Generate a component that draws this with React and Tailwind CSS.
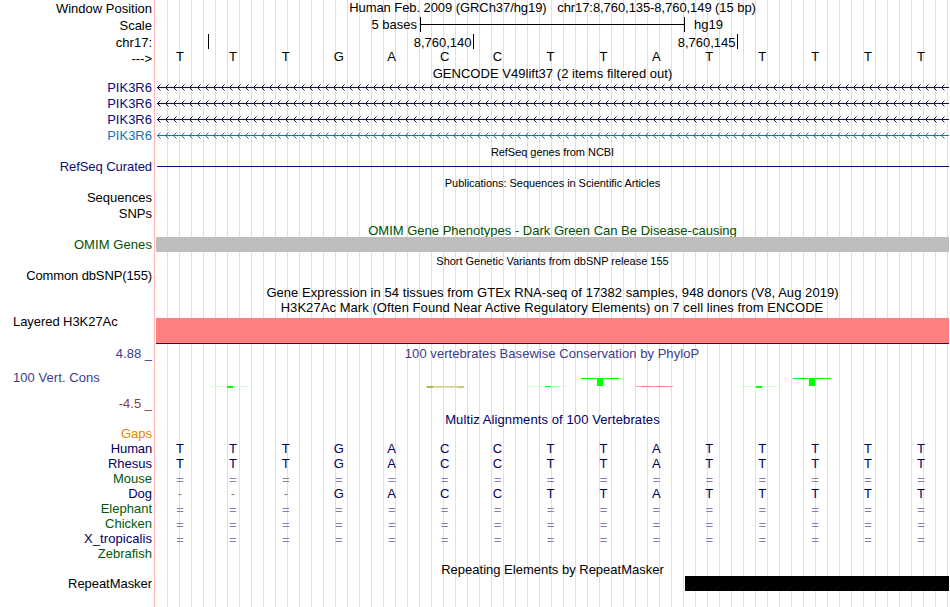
import clsx from "clsx";

const NAVY = "text-[#0c0c78]";
const ALIGN = "text-[#000064]";
const GREEN = "text-[#005000]";
const SPECIES_GREEN = "text-[#005a0a]";

// Labels of the left column, top to bottom. h and gap (space above) are Tailwind classes.
const labels = [
  { text: "Window Position", h: "h-[17px]" },
  { text: "Scale", h: "h-4" },
  { text: "chr17:", h: "h-[18px]" },
  { text: "--->", h: "h-[15px]" },
  { text: "PIK3R6", h: "h-4", gap: "mt-[13px]", color: NAVY },
  { text: "PIK3R6", h: "h-4", color: NAVY },
  { text: "PIK3R6", h: "h-4", color: NAVY },
  { text: "PIK3R6", h: "h-4", color: "text-[#1474b0]" },
  { text: "RefSeq Curated", h: "h-[15px]", gap: "mt-4", color: NAVY, track: "tracking-[-0.07px]" },
  { text: "Sequences", h: "h-4", gap: "mt-[15px]" },
  { text: "SNPs", h: "h-4" },
  { text: "OMIM Genes", h: "h-[15px]", gap: "mt-4", color: GREEN, track: "tracking-[0.08px]" },
  { text: "Common dbSNP(155)", h: "h-[15px]", gap: "mt-4", track: "tracking-[-0.12px]" },
  { text: "Layered H3K27Ac", h: "h-[15px]", gap: "mt-[31px]", left: true, track: "tracking-[-0.06px]" },
  { text: "4.88 _", h: "h-4", gap: "mt-4", color: "text-[#3c3c8c]" },
  { text: "100 Vert. Cons", h: "h-[15px]", gap: "mt-[9px]", left: true, color: "text-[#3c3c8c]", track: "tracking-[0.06px]" },
  { text: "-4.5 _", h: "h-4", gap: "mt-[10px]", color: "text-[#8c3c3c]" },
  { text: "Gaps", h: "h-[15px]", gap: "mt-[15px]", color: "text-[#e18700]" },
  { text: "Human", h: "h-[15px]", color: ALIGN, track: "tracking-[-0.15px]" },
  { text: "Rhesus", h: "h-[15px]", color: ALIGN },
  { text: "Mouse", h: "h-[15px]", color: SPECIES_GREEN },
  { text: "Dog", h: "h-[15px]", color: ALIGN },
  { text: "Elephant", h: "h-[15px]", color: SPECIES_GREEN },
  { text: "Chicken", h: "h-[15px]", color: SPECIES_GREEN },
  { text: "X_tropicalis", h: "h-[15px]", color: ALIGN, track: "tracking-[0.06px]" },
  { text: "Zebrafish", h: "h-[15px]", color: SPECIES_GREEN },
  { text: "RepeatMasker", h: "h-[15px]", gap: "mt-[15px]", track: "tracking-[-0.05px]" },
];

const alignments = [
  "TTTGACCTTATTTTT",
  "TTTGACCTTATTTTT",
  "===============",
  "---GACCTTATTTTT",
  "===============",
  "===============",
  "===============",
];

const Labels = () => (
  <div className="flex w-[154px] shrink-0 flex-col">
    {labels.map(({ text, h, gap, color, left, track }, i) => (
      <div
        key={i}
        className={clsx("flex shrink-0 items-center whitespace-nowrap", h, gap, color, track, left ? "pl-[13px]" : "justify-end pr-[2px]")}
      >
        {text}
      </div>
    ))}
  </div>
);

const Title = ({ className, children }) => (
  <div className={clsx("flex shrink-0 items-center justify-center whitespace-pre", className)}>{children}</div>
);

const Bases = ({ seq, className }) => (
  <div className={clsx("-ml-[2.5px] grid w-[794px] shrink-0 grid-cols-15 items-center text-center", className)}>
    {seq.split("").map((base, i) => (
      <span key={i} className={clsx((base === "=" || base === "-") && "text-[#8080b8]", base === "=" && "pt-px")}>
        {base}
      </span>
    ))}
  </div>
);

// Intron line with strand arrows every 8px
const Gene = ({ color }) => (
  <svg width="793" height="16" className="block shrink-0" fill={color} shapeRendering="crispEdges">
    <rect x="1" y="8" width="792" height="1" />
    {Array.from({ length: 99 }, (_, i) => (
      <g key={i}>
        <rect x={i * 8 + 2} y="7" width="1" height="3" />
        <rect x={i * 8 + 3} y="6" width="1" height="1" />
        <rect x={i * 8 + 3} y="10" width="1" height="1" />
        <rect x={i * 8 + 4} y="5" width="1" height="1" opacity="0.45" />
        <rect x={i * 8 + 4} y="11" width="1" height="1" opacity="0.45" />
      </g>
    ))}
  </svg>
);

const Ruler = () => (
  <>
    <div className="flex h-[17px] shrink-0 items-center">
      <span className="w-[261px] text-right">5 bases</span>
      <div className="ml-[3px] flex h-[15px] w-[265px] items-center border-x border-black">
        <div className="h-px w-full bg-black" />
      </div>
      <span className="ml-[9px]">hg19</span>
    </div>
    <div className="flex h-[16px] shrink-0 items-center">
      <div className="h-[15px] w-[53px] border-r border-black" />
      <div className="flex h-[15px] w-[265px] items-center justify-end border-r border-black pt-[3px] pr-[1.5px]">8,760,140</div>
      <div className="flex h-[15px] w-[264px] items-center justify-end border-r border-black pt-[3px] pr-[1.5px]">8,760,145</div>
    </div>
  </>
);

const Conservation = () => (
  <svg width="793" height="14" viewBox="156 376 793 14" className="mt-[15px] block shrink-0" shapeRendering="crispEdges">
    <g fill="#d2ffd2">
      <rect x="211" y="386" width="37" height="1" />
      <rect x="529" y="386" width="37" height="1" />
      <rect x="740" y="386" width="37" height="1" />
    </g>
    <g fill="#00ff00">
      <rect x="227" y="386" width="6" height="2" />
      <rect x="545" y="386" width="6" height="1" />
      <rect x="581" y="378" width="38" height="1" />
      <rect x="597" y="378" width="6" height="8" />
      <rect x="756" y="386" width="6" height="2" />
      <rect x="793" y="378" width="38" height="1" />
      <rect x="809" y="378" width="6" height="8" />
    </g>
    <rect x="426" y="386" width="37" height="1" fill="#d0d08c" />
    <rect x="428" y="387" width="37" height="1" fill="#e4e4b4" />
    <rect x="427" y="386" width="6" height="2" fill="#b4b43c" />
    <rect x="458" y="386" width="6" height="2" fill="#c8c878" />
    <rect x="636" y="386" width="37" height="1" fill="#ffa0a0" />
    <rect x="642" y="386" width="8" height="1" fill="#ff7878" />
    <rect x="657" y="386" width="8" height="1" fill="#ff7878" />
  </svg>
);

const Tracks = () => (
  <div className="flex w-[793px] flex-col">
    <Title className="h-[15px] tracking-[-0.07px]">{"Human Feb. 2009 (GRCh37/hg19)   chr17:8,760,135-8,760,149 (15 bp)"}</Title>
    <div className="h-px shrink-0" />
    <Ruler />
    <Bases seq="TTTGACCTTATTTTT" className="h-[15px]" />
    <Title className="mt-[2px] h-[13px] pt-[2px] tracking-[0.03px]">GENCODE V49lift37 (2 items filtered out)</Title>
    <Gene color="#0c0c78" />
    <Gene color="#0c0c78" />
    <Gene color="#0c0c78" />
    <Gene color="#1474b0" />
    <Title className="mt-[2px] h-[15px] text-[11px] tracking-[-0.04px]">RefSeq genes from NCBI</Title>
    <div className="mt-[6px] ml-px h-px shrink-0 bg-[#0c0c78]" />
    <Title className="mt-[9px] h-[15px] text-[11px] tracking-[-0.05px]">Publications: Sequences in Scientific Articles</Title>
    <Title className={clsx("mt-8 h-[14px]", GREEN)}>OMIM Gene Phenotypes - Dark Green Can Be Disease-causing</Title>
    <div className="h-[15px] shrink-0 bg-[#bebebe]" />
    <Title className="mt-[2px] h-[15px] text-[11px] tracking-[-0.02px]">Short Genetic Variants from dbSNP release 155</Title>
    <Title className="mt-4 h-[15px] tracking-[0.055px]">Gene Expression in 54 tissues from GTEx RNA-seq of 17382 samples, 948 donors (V8, Aug 2019)</Title>
    <Title className="h-[18px] pr-px pb-[3px] tracking-[0.06px]">H3K27Ac Mark (Often Found Near Active Regulatory Elements) on 7 cell lines from ENCODE</Title>
    <div className="h-[26px] shrink-0 border-b border-[#500028] bg-[#ff8080]" />
    <Title className="mt-[2px] h-[15px] pr-px tracking-[0.05px] text-[#3c3c8c]">100 vertebrates Basewise Conservation by PhyloP</Title>
    <Conservation />
    <Title className={clsx("mt-[22px] h-[15px] tracking-[0.1px]", ALIGN)}>Multiz Alignments of 100 Vertebrates</Title>
    <div className={clsx("mt-[14px] flex flex-col", ALIGN)}>
      {alignments.map((seq, i) => (
        <Bases key={i} seq={seq} className="h-[15px]" />
      ))}
    </div>
    <Title className="mt-4 h-[14px]">Repeating Elements by RepeatMasker</Title>
    <div className="ml-[529px] h-[15px] shrink-0 bg-black" />
  </div>
);

const App = () => {
  return (
    <div className="flex h-[607px] w-[950px] overflow-hidden bg-white font-['Liberation_Sans',Arial,sans-serif] text-[13px] leading-[15px] text-black">
      <Labels />
      {/* Guide lines every 12px behind all tracks */}
      <div className="flex-1 border-l border-[#ffb4b4] bg-[repeating-linear-gradient(to_right,transparent_0_11px,#dcdcff_11px_12px)] bg-[position:1px_0] pl-px">
        <Tracks />
      </div>
    </div>
  );
};

export default App;
